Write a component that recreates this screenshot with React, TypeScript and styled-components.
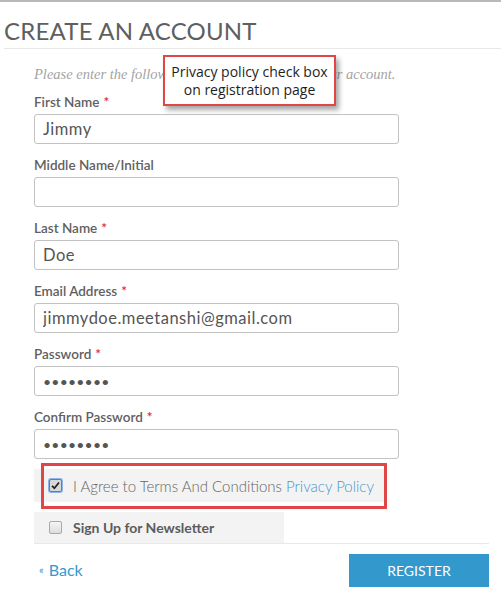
import styled, { createGlobalStyle } from "styled-components";

const GlobalStyle = createGlobalStyle`
  html, body {
    margin: 0;
    padding: 0;
    background: #ffffff;
  }
  body {
    font-family: "Lato", "Open Sans", sans-serif;
    width: 501px;
    height: 612px;
    overflow: hidden;
  }
`;

const Page = styled.div`
  border-top: 2px solid #b9b9b9;
  position: relative;
`;

const Title = styled.h1`
  margin: 17px 0 0 4px;
  padding-bottom: 5px;
  font-family: "Lato", sans-serif;
  font-size: 24px;
  font-weight: 400;
  line-height: 24px;
  letter-spacing: 0.2px;
  color: #5f5f5f;
  border-bottom: 1px solid #e8e8e8;
`;

const FormBody = styled.div`
  padding: 17px 12px 0 34px;
`;

const Intro = styled.p`
  margin: 0 0 12px;
  font-family: "Liberation Serif", serif;
  font-style: italic;
  font-size: 14.5px;
  line-height: 16px;
  color: #a3a3a3;
`;

const Field = styled.div`
  display: flex;
  flex-direction: column;
  gap: 4px;
  margin-bottom: 13px;
`;

const Label = styled.label`
  font-size: 13.5px;
  line-height: 16px;
  font-weight: 600;
  color: #606060;
`;

const Star = styled.span`
  color: #e02b27;
  margin-left: 4px;
`;

const Input = styled.input`
  box-sizing: border-box;
  width: 365px;
  height: 30px;
  border: 1px solid #c2c2c2;
  border-radius: 3px;
  padding: 0 8px;
  font-family: "Lato", sans-serif;
  font-size: 16.5px;
  letter-spacing: 0.5px;
  color: #555;
  background: #fff;
  outline: none;
  &[type="password"] {
    font-size: 14px;
    letter-spacing: 0.2px;
  }
`;

const Options = styled.div`
  margin-top: -3px;
  display: flex;
  flex-direction: column;
  gap: 10px;
  border-bottom: 1px solid #e8e8e8;
  width: 455px;
`;

const OptionRow = styled.div<{ $width: number; $height: number }>`
  position: relative;
  display: flex;
  align-items: center;
  gap: 11px;
  box-sizing: border-box;
  width: ${(p) => p.$width}px;
  height: ${(p) => p.$height}px;
  padding-left: 15px;
  background: #f3f3f3;
`;

const Box = styled.span<{ $checked?: boolean }>`
  box-sizing: border-box;
  width: 13px;
  height: 13px;
  border-radius: 2px;
  border: 1px solid ${(p) => (p.$checked ? "#5c7fa8" : "#a8a8a8")};
  background: ${(p) => (p.$checked ? "#d8d8d8" : "linear-gradient(#f4f4f4, #dedede)")};
  box-shadow: ${(p) => (p.$checked ? "0 0 0 1px #8fb4e8" : "none")};
  display: flex;
  align-items: center;
  justify-content: center;
  flex-shrink: 0;
`;

const AgreeText = styled.span`
  font-size: 15px;
  font-weight: 300;
  color: #666666;
`;

const PolicyLink = styled.a`
  color: #4a93cc;
  text-decoration: none;
`;

const NewsText = styled.span`
  font-size: 14px;
  font-weight: 700;
  color: #5c5c5c;
`;

const Callout = styled.div`
  position: absolute;
  left: 7px;
  top: -6px;
  width: 346px;
  height: 46px;
  box-sizing: border-box;
  border: 3px solid #e04646;
  pointer-events: none;
`;

const Actions = styled.div`
  display: flex;
  justify-content: space-between;
  align-items: center;
  width: 455px;
  padding-top: 10px;
`;

const BackLink = styled.a`
  margin-left: 5px;
  margin-top: -2px;
  color: #3399cc;
  font-size: 16px;
  text-decoration: none;
  display: flex;
  align-items: center;
  gap: 5px;
  span {
    font-size: 11px;
  }
`;

const RegisterButton = styled.button`
  width: 140px;
  height: 33px;
  border: none;
  background: #3399cc;
  color: #ffffff;
  font-family: "Lato", sans-serif;
  font-size: 14px;
`;

const Note = styled.div`
  position: absolute;
  left: 163px;
  top: 53px;
  width: 173px;
  height: 51px;
  box-sizing: border-box;
  border: 2px solid #e04646;
  background: #ffffff;
  box-shadow: 3px 4px 5px rgba(0, 0, 0, 0.35);
  display: flex;
  align-items: center;
  justify-content: center;
  text-align: center;
  font-family: "Open Sans", sans-serif;
  font-size: 14px;
  line-height: 18px;
  color: #1e1e1e;
`;

const fields = [
  { label: "First Name", required: true, value: "Jimmy", type: "text" },
  { label: "Middle Name/Initial", required: false, value: "", type: "text" },
  { label: "Last Name", required: true, value: "Doe", type: "text" },
  { label: "Email Address", required: true, value: "jimmydoe.meetanshi@gmail.com", type: "email" },
  { label: "Password", required: true, value: "12345678", type: "password" },
  { label: "Confirm Password", required: true, value: "12345678", type: "password" },
];

const Check = () => (
  <svg width="9" height="9" viewBox="0 0 9 9">
    <path d="M1 4.8 L3.4 7.2 L8 1.5" stroke="#222" strokeWidth="1.8" fill="none" />
  </svg>
);

export default function App() {
  return (
    <>
      <GlobalStyle />
      <Page>
        <Title>CREATE AN ACCOUNT</Title>
        <FormBody>
          <Intro>Please enter the following information to create your account.</Intro>
          {fields.map((f) => (
            <Field key={f.label}>
              <Label>
                {f.label}
                {f.required && <Star>*</Star>}
              </Label>
              <Input type={f.type} defaultValue={f.value} readOnly />
            </Field>
          ))}
          <Options>
            <OptionRow $width={351} $height={33}>
              <Box $checked>
                <Check />
              </Box>
              <AgreeText>
                I Agree to Terms And Conditions <PolicyLink href="#">Privacy Policy</PolicyLink>
              </AgreeText>
              <Callout />
            </OptionRow>
            <OptionRow $width={250} $height={31}>
              <Box />
              <NewsText>Sign Up for Newsletter</NewsText>
            </OptionRow>
          </Options>
          <Actions>
            <BackLink href="#">
              <span>«</span>Back
            </BackLink>
            <RegisterButton>REGISTER</RegisterButton>
          </Actions>
        </FormBody>
        <Note>
          Privacy policy check box
          <br />
          on registration page
        </Note>
      </Page>
    </>
  );
}
